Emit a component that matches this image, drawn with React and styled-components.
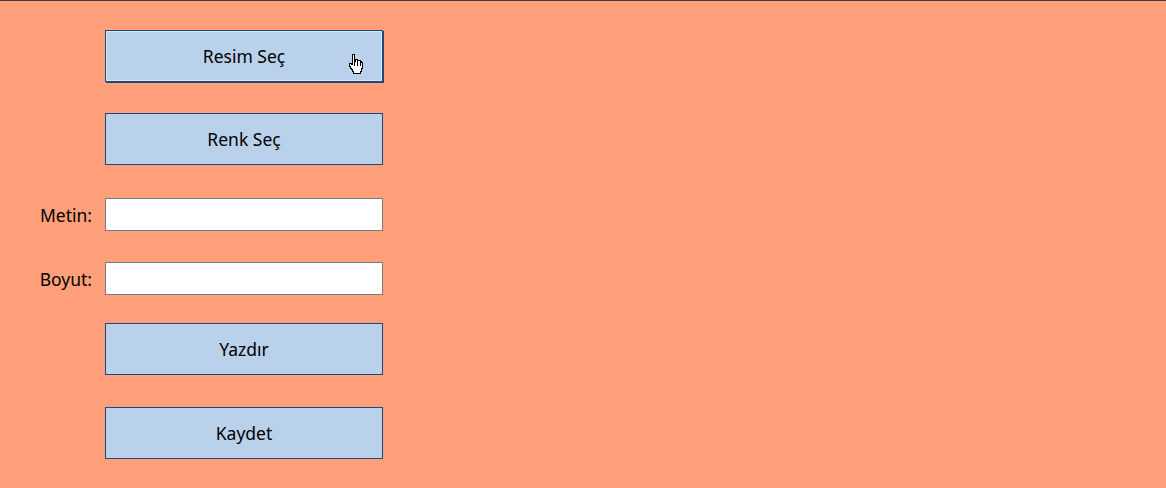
import React from "react";
import styled, { createGlobalStyle } from "styled-components";

const Global = createGlobalStyle`
  html, body { margin: 0; padding: 0; background: #ffa07a; }
  body { font-family: "Noto Sans", "Open Sans", sans-serif; }
`;

const Window = styled.div`
  width: 1166px;
  height: 488px;
  background: #ffa07a;
  border-top: 1px solid #3a3a3a;
  box-sizing: border-box;
  padding-top: 29px;
  display: flex;
  flex-direction: column;
`;

const Row = styled.div`
  display: grid;
  grid-template-columns: 93px 278px;
  column-gap: 12px;
  align-items: center;
  margin-top: ${(p) => p.$gap || 0}px;
`;

const Label = styled.label`
  grid-column: 1;
  text-align: right;
  font-size: 17.5px;
  color: #000;
  padding-right: 1px;
`;

const Button = styled.button`
  grid-column: 2;
  height: 52px;
  box-sizing: border-box;
  background: #b9d1ea;
  border: 1px solid #1f4a78;
  box-shadow: ${(p) => (p.$focused ? "inset 0 0 0 1px #d8e6f4, 1px 1px 0 0 #1f4a78" : "none")};
  font-family: inherit;
  font-size: 17.5px;
  color: #000;
  padding: 0;
  position: relative;
  cursor: pointer;
`;

const Input = styled.input`
  grid-column: 2;
  height: 33px;
  box-sizing: border-box;
  background: #fff;
  border: 1px solid #7a7a7a;
  outline: none;
  padding: 0 4px;
  font-family: inherit;
  font-size: 15px;
`;

const Cursor = styled.svg`
  position: absolute;
  left: 241px;
  top: 22px;
`;

function HandCursor() {
  return (
    <Cursor width="17" height="22" viewBox="0 0 17 22" shapeRendering="crispEdges">
      <path
        d="M5 1h2v7h1v-2h2v1h1v-0h2v1h1v1h1v6h-1v3h-1v2H6v-2H5v-2H4v-1H3v-2H2v-3h2v1h1V1z"
        fill="#fff"
        stroke="#000"
        strokeWidth="1"
      />
      <path d="M7.5 9v4M10.5 8v5M13.5 9v4" stroke="#000" strokeWidth="1" />
    </Cursor>
  );
}

export default function App() {
  return (
    <>
      <Global />
      <Window>
        <Row>
          <Button $focused>
            Resim Seç
            <HandCursor />
          </Button>
        </Row>
        <Row $gap={31}>
          <Button>Renk Seç</Button>
        </Row>
        <Row $gap={33}>
          <Label>Metin:</Label>
          <Input />
        </Row>
        <Row $gap={31}>
          <Label>Boyut:</Label>
          <Input />
        </Row>
        <Row $gap={28}>
          <Button>Yazdır</Button>
        </Row>
        <Row $gap={32}>
          <Button>Kaydet</Button>
        </Row>
      </Window>
    </>
  );
}
